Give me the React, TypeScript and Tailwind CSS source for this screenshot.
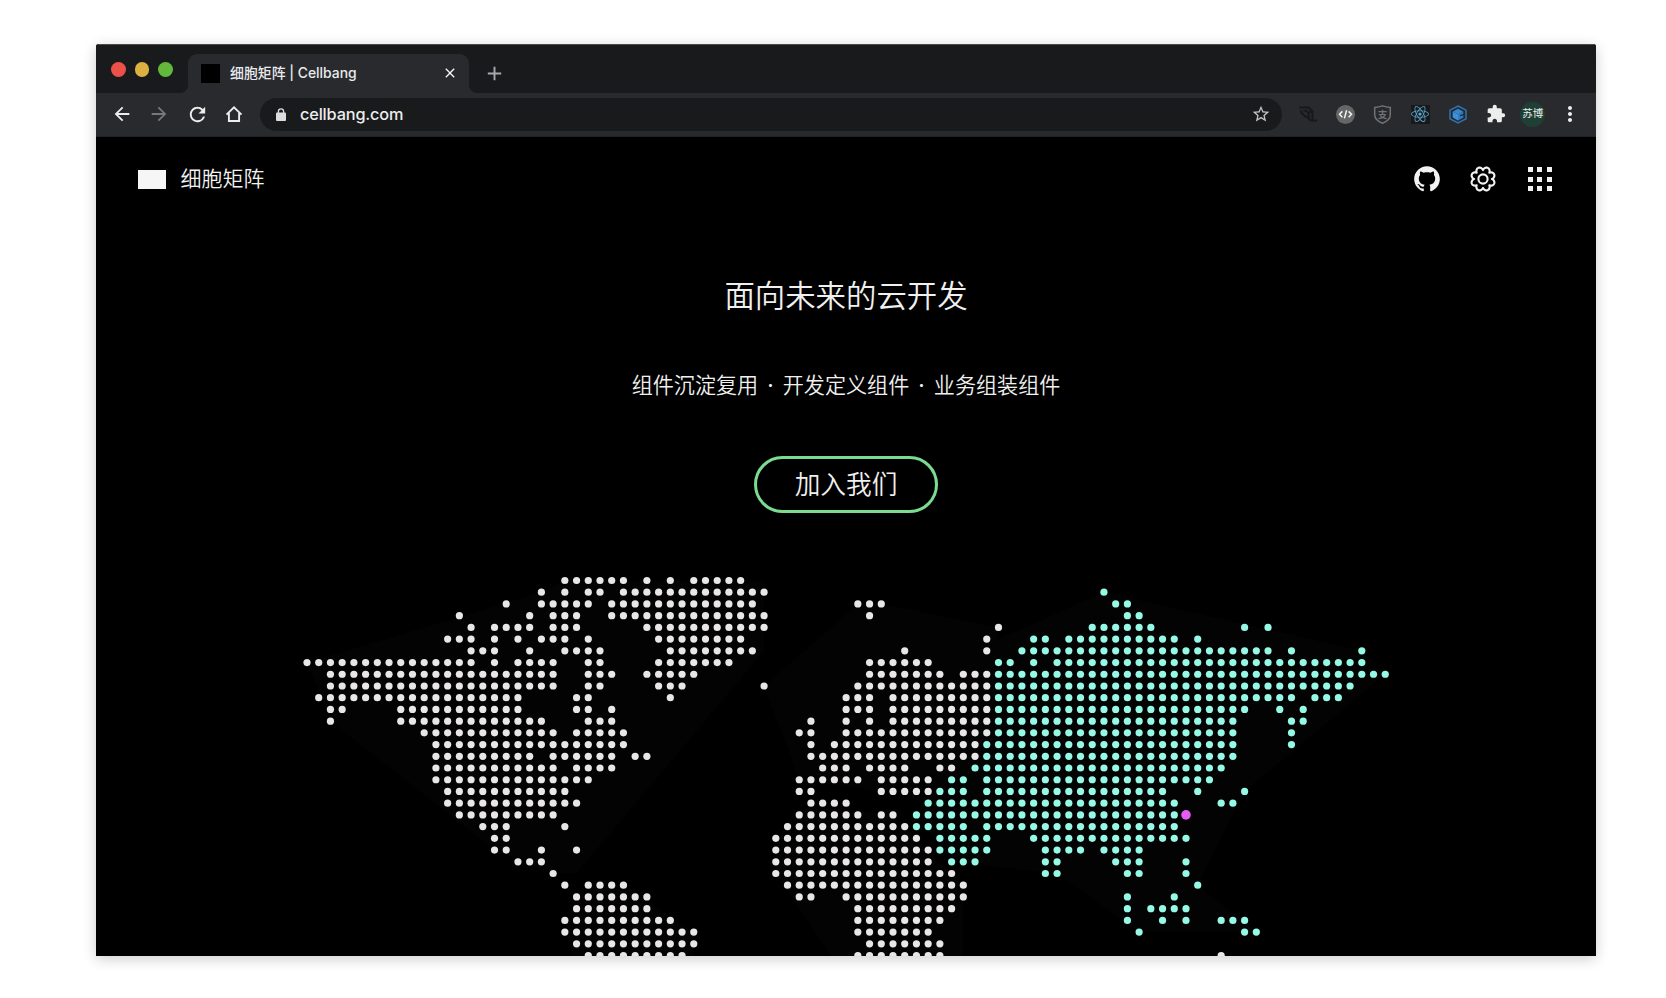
import { ReactNode } from "react";
import { MdArrowBack, MdArrowForward, MdRefresh, MdStarBorder, MdExtension, MdMoreVert, MdClose, MdAdd } from "react-icons/md";
import { GrGithub } from "react-icons/gr";
import { FaReact } from "react-icons/fa";

type Run = [number, number];
type Row = { land?: Run[]; asia?: Run[] };

// Filled column ranges of the dot grid, one entry per grid row.
const ROWS: Row[] = [
  { land: [[22, 27], [29, 29], [31, 31], [33, 37]] },
  { land: [[20, 20], [22, 22], [24, 25], [27, 39]], asia: [[68, 68]] },
  { land: [[17, 17], [20, 24], [26, 38], [47, 49]], asia: [[69, 70]] },
  { land: [[13, 13], [19, 19], [21, 23], [26, 39], [48, 48]], asia: [[70, 71]] },
  { land: [[14, 14], [16, 19], [21, 23], [29, 39], [59, 59]], asia: [[67, 72], [80, 80], [82, 82]] },
  { land: [[12, 14], [16, 16], [18, 18], [20, 22], [24, 24], [30, 37], [58, 58]], asia: [[62, 63], [65, 74], [76, 76]] },
  { land: [[14, 16], [19, 19], [22, 25], [31, 38], [51, 51], [58, 58]], asia: [[61, 82], [84, 84], [90, 90]] },
  { land: [[0, 14], [16, 16], [18, 21], [24, 25], [30, 36], [48, 53]], asia: [[59, 60], [62, 62], [64, 90]] },
  { land: [[2, 21], [24, 26], [29, 33], [48, 54], [56, 58]], asia: [[59, 92]] },
  { land: [[2, 21], [24, 25], [30, 32], [39, 39], [47, 58]], asia: [[59, 89]] },
  { land: [[1, 18], [23, 24], [31, 31], [46, 48], [50, 58]], asia: [[59, 84], [86, 88]] },
  { land: [[2, 3], [8, 18], [23, 24], [26, 26], [46, 48], [50, 58]], asia: [[59, 80], [83, 83], [85, 85]] },
  { land: [[2, 2], [8, 20], [24, 26], [43, 43], [46, 46], [48, 48], [50, 58]], asia: [[59, 79], [84, 85]] },
  { land: [[10, 21], [23, 27], [42, 43], [46, 58]], asia: [[59, 79], [84, 84]] },
  { land: [[11, 27], [43, 43], [45, 57]], asia: [[58, 79], [84, 84]] },
  { land: [[11, 19], [21, 26], [28, 29], [43, 57]], asia: [[58, 79]] },
  { land: [[11, 21], [23, 26], [44, 46], [48, 51], [54, 55]], asia: [[57, 78]] },
  { land: [[11, 24], [42, 47], [49, 53]], asia: [[55, 56], [58, 77]] },
  { land: [[12, 22], [42, 43], [49, 53]], asia: [[54, 56], [58, 73], [76, 76], [80, 80]] },
  { land: [[12, 23], [43, 46]], asia: [[53, 74], [78, 79]] },
  { land: [[13, 21], [42, 47], [49, 50]], asia: [[52, 74]] },
  { land: [[15, 17], [22, 22], [41, 51]], asia: [[52, 56], [58, 74]] },
  { land: [[16, 17], [40, 52]], asia: [[54, 58], [62, 75]] },
  { land: [[16, 17], [20, 20], [23, 23], [40, 53]], asia: [[54, 58], [63, 66], [68, 71]] },
  { land: [[18, 20], [40, 53]], asia: [[55, 57], [63, 64], [69, 71], [75, 75]] },
  { land: [[21, 21], [40, 55]], asia: [[63, 64], [70, 71], [75, 75]] },
  { land: [[22, 22], [24, 27], [41, 56]], asia: [[76, 76]] },
  { land: [[23, 29], [42, 43], [46, 56]], asia: [[70, 70], [74, 74]] },
  { land: [[23, 29], [47, 55]], asia: [[70, 70], [72, 75]] },
  { land: [[22, 31], [47, 54]], asia: [[70, 70], [73, 73], [75, 75], [78, 80]] },
  { land: [[22, 33], [47, 53]], asia: [[71, 71], [80, 81]] },
  { land: [[23, 33], [48, 54]] },
  { land: [[24, 32], [47, 54], [78, 78]] },
];

const PITCH = 11.72;
const cx = (c: number) => 211 + c * PITCH;
const cy = (r: number) => 20.5 + r * PITCH;

function Dots({ runs, row, color }: { runs?: Run[]; row: number; color: string }) {
  return (
    <g fill={color}>
      {(runs ?? []).flatMap(([a, b]) =>
        Array.from({ length: b - a + 1 }, (_, i) => (
          <circle key={a + i} cx={cx(a + i)} cy={cy(row)} r={3.6} />
        )),
      )}
    </g>
  );
}

function hull(points: [number, number][]) {
  return points.map(([c, r]) => `${cx(c)},${cy(r)}`).join(" ");
}

function WorldMap() {
  return (
    <svg className="block h-[396px] w-full shrink-0" viewBox="0 0 1500 396">
      <g fill="#030303">
        <polygon points={hull([[0, 7], [20, 1], [22, 0], [39, 0], [39, 6], [23, 25], [21, 25], [16, 23], [2, 12]])} />
        <polygon points={hull([[24, 26], [27, 26], [33, 30], [33, 34], [23, 34], [22, 29]])} />
        <polygon points={hull([[39, 9], [47, 2], [49, 2], [59, 4], [58, 15], [49, 18], [42, 17]])} />
        <polygon points={hull([[43, 19], [50, 20], [56, 26], [56, 34], [46, 34], [40, 25], [40, 22]])} />
        <polygon points={hull([[59, 5], [68, 1], [90, 6], [92, 8], [80, 18], [76, 26], [81, 30], [71, 30], [64, 25], [55, 24], [52, 20]])} />
      </g>
      {ROWS.map((row, r) => (
        <g key={r}>
          <Dots runs={row.land} row={r} color="#e8e6e6" />
          <Dots runs={row.asia} row={r} color="#96f9e6" />
        </g>
      ))}
      <circle cx={cx(75)} cy={cy(20)} r={4.8} fill="#e65cf5" />
    </svg>
  );
}

// Eight rounded lobes, with a notch at every multiple of 45 degrees.
const GEAR = Array.from({ length: 144 }, (_, i) => {
  const t = (i * Math.PI) / 72;
  const r = 8.9 + 3.2 * Math.pow(Math.abs(Math.sin(4 * t)), 0.75);
  return `${(14 + r * Math.cos(t)).toFixed(2)},${(14 + r * Math.sin(t)).toFixed(2)}`;
}).join(" ");

function Gear() {
  return (
    <svg className="size-[28px]" viewBox="0 0 28 28" fill="none" stroke="currentColor" strokeWidth="2.1" strokeLinejoin="round">
      <polygon points={GEAR} />
      <circle cx="14" cy="14" r="4.6" />
    </svg>
  );
}

function AppsGrid() {
  return (
    <div className="ml-[3px] mr-[2px] grid grid-cols-[5px_5px_5px] gap-[4.6px]">
      {Array.from({ length: 9 }, (_, i) => (
        <span key={i} className="size-[5px] bg-[#f2f2f2]" />
      ))}
    </div>
  );
}

function Cell({ children }: { children: ReactNode }) {
  return <div className="flex w-[37.5px] shrink-0 items-center justify-center pb-[1px]">{children}</div>;
}

function TabStrip() {
  return (
    <div className="flex h-[49px] shrink-0 items-end border-t border-[#4a4b4c] bg-[#191a1c]">
      <div className="flex h-full w-[92px] shrink-0 items-center gap-[9px] pl-[15px] pt-[1px]">
        <span className="size-[14.5px] rounded-full bg-[#ec5149]" />
        <span className="size-[14.5px] rounded-full bg-[#dcb13f]" />
        <span className="size-[14.5px] rounded-full bg-[#62b93c]" />
      </div>
      <div className="relative flex h-[39.5px] w-[281px] shrink-0 items-center rounded-t-[9px] bg-[#292a2d] pl-[13px] pr-[11px]">
        <svg className="absolute -left-[8px] bottom-0 size-[8px]" viewBox="0 0 8 8">
          <path d="M8 0v8H0a8 8 0 0 0 8-8" fill="#292a2d" />
        </svg>
        <svg className="absolute -right-[8px] bottom-0 size-[8px]" viewBox="0 0 8 8">
          <path d="M0 0v8h8a8 8 0 0 1-8-8" fill="#292a2d" />
        </svg>
        <span className="size-[19px] bg-black" />
        <span className="ml-[10px] whitespace-nowrap pb-[1px] text-[13.9px] font-medium leading-5 text-[#e8eaed]">细胞矩阵 | Cellbang</span>
        <MdClose className="ml-auto size-[16px] text-[#f8f8f8]" />
      </div>
      <div className="flex h-[39.5px] items-center pl-[14px]">
        <MdAdd className="size-[23px] text-[#a8a9ac]" />
      </div>
    </div>
  );
}

function Toolbar() {
  return (
    <div className="flex h-[44px] shrink-0 items-center border-b border-[#232427] bg-[#292a2d] pl-[7px] text-[#eceded]">
      <Cell><MdArrowBack className="size-[22px]" /></Cell>
      <Cell><MdArrowForward className="size-[22px] text-[#77787b]" /></Cell>
      <Cell><MdRefresh className="ml-[1px] size-[23px]" /></Cell>
      <Cell>
        <svg className="size-[18px]" viewBox="0 0 18 18" fill="none" stroke="currentColor" strokeWidth="1.9">
          <path d="M1.5 9.6 9 2.4l7.5 7.2M3.9 8v8h10.2V8" />
        </svg>
      </Cell>
      <div className="ml-[7px] flex h-[33px] w-[1022px] items-center rounded-full bg-[#191a1c] pb-[1px] pl-[16px] pr-[11px]">
        <svg className="h-[13px] w-[10px] text-[#dcdddf]" viewBox="0 0 10 13">
          <rect y="4.6" width="10" height="8.4" rx="1" fill="currentColor" />
          <path d="M2.4 5V3.4a2.6 2.6 0 0 1 5.2 0V5" fill="none" stroke="currentColor" strokeWidth="1.3" />
        </svg>
        <span className="ml-[14px] pb-[1px] text-[16.3px] font-medium leading-5 tracking-[-0.15px]">cellbang.com</span>
        <MdStarBorder className="ml-auto size-[20px] text-[#bfc0c2]" />
      </div>
      <div className="ml-[7px] flex h-full">
        <Cell>
          <svg className="size-[18px]" viewBox="0 0 18 18" fill="none" stroke="#17181a" strokeWidth="2">
            <path d="M0 2.5h9.5l4 4v8.5M2.2 5.2v2.3l4.3 4.3h3.3V8.3L7.3 5.8H4.5M10 7l3.4 0M8 11.8l3.6 3.7H18" />
          </svg>
        </Cell>
        <Cell>
          <svg className="size-[19px]" viewBox="0 0 19 19" fill="none" stroke="#f3f3f3" strokeWidth="1.5">
            <circle cx="9.5" cy="9.5" r="9.5" fill="#666" stroke="none" />
            <path d="M6.4 6.4 3.5 9.3l2.9 2.9M12.6 6.4l2.9 2.9-2.9 2.9M10.6 5.3 8.4 13.4" />
          </svg>
        </Cell>
        <Cell>
          <svg className="size-[19px]" viewBox="0 0 19 19">
            <path d="M1.7 2.4Q5.7 2.3 9.5.9q3.8 1.4 7.8 1.5v7.4q0 5.4-7.8 8.5-7.8-3.1-7.8-8.5z" fill="none" stroke="#717275" strokeWidth="1.5" />
            <text x="9.5" y="12.6" textAnchor="middle" fontSize="9.5" fontWeight="700" fill="#717275">支</text>
          </svg>
        </Cell>
        <Cell>
          <span className="flex size-[19px] items-center justify-center bg-[#19191b]">
            <FaReact className="size-[18px] text-[#5aa9d0]" />
          </span>
        </Cell>
        <Cell>
          <svg className="h-[19px] w-[18px]" viewBox="0 0 18 19">
            <path d="M9 1 17 5.2v8.6L9 18 1 13.8V5.2z" fill="none" stroke="#2d74b5" strokeWidth="1.5" />
            <path d="M9 3.8 14.3 6.8 9 9.2 3.7 6.8z" fill="#3389d3" />
            <path d="M3.7 6.8 9 9.2v6.2l-5.3-3z" fill="#3c92db" />
            <path d="M9 9.2 14.3 6.8v1.9L11 10.3v1.3l3.3-1.4v2.2L9 15.4z" fill="#2d7fc6" />
          </svg>
        </Cell>
        <Cell><MdExtension className="ml-[1px] size-[20px]" /></Cell>
        <Cell>
          <span className="flex size-[25px] items-center justify-center rounded-full bg-[#1e4034] pt-[1px] text-[10.5px] leading-none">苏博</span>
        </Cell>
        <Cell><MdMoreVert className="size-[24px]" /></Cell>
      </div>
    </div>
  );
}

export default function App() {
  return (
    <div className="flex h-[998px] w-[1666px] flex-col bg-white pl-[96px] pt-[44px] font-['Inter','Noto_Sans_CJK_SC',sans-serif]">
      <div className="flex h-[911.5px] w-[1500px] flex-col overflow-hidden rounded-t-[3px] bg-black shadow-[0_3px_14px_rgba(0,0,0,0.2)]">
        <TabStrip />
        <Toolbar />
        <div className="flex h-[84px] shrink-0 items-center pl-[42px] pr-[42px] text-[#f2f2f2]">
          <span className="h-[19px] w-[28px] bg-[#f6f6f6]" />
          <span className="ml-[14.5px] pb-[1px] text-[21px] font-[350] leading-7">细胞矩阵</span>
          <div className="ml-auto flex items-center gap-[28px]">
            <GrGithub className="size-[28px]" />
            <Gear />
            <AppsGrid />
          </div>
        </div>
        <main className="flex grow flex-col items-center text-[#f0f0f0]">
          <h1 className="mt-[55px] text-[30.4px] font-[350] leading-[40px]">面向未来的云开发</h1>
          <p className="mt-[55px] flex text-[21.1px] font-[350] leading-[30px]">
            <span>组件沉淀复用</span>
            <span className="w-[24.5px] text-center font-medium">·</span>
            <span>开发定义组件</span>
            <span className="w-[24.5px] text-center font-medium">·</span>
            <span>业务组装组件</span>
          </p>
          <button className="mb-[47px] mt-[55px] flex h-[57px] w-[184px] shrink-0 items-center justify-center rounded-full border-[3px] border-[#7bdc91] text-[25.7px] font-[350] leading-none">加入我们</button>
          <WorldMap />
        </main>
      </div>
    </div>
  );
}
